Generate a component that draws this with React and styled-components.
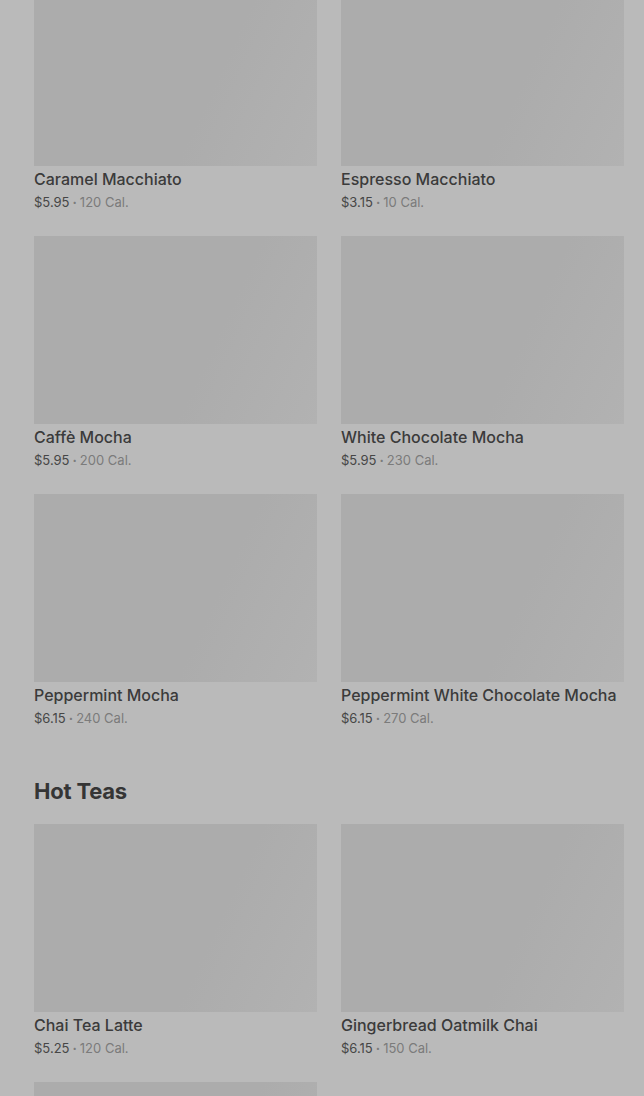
import React from "react";
import styled, { createGlobalStyle } from "styled-components";

const sections = [
  {
    title: null,
    items: [
      { name: "Caramel Macchiato", price: "$5.95", cal: "120 Cal." },
      { name: "Espresso Macchiato", price: "$3.15", cal: "10 Cal." },
      { name: "Caffè Mocha", price: "$5.95", cal: "200 Cal." },
      { name: "White Chocolate Mocha", price: "$5.95", cal: "230 Cal." },
      { name: "Peppermint Mocha", price: "$6.15", cal: "240 Cal." },
      { name: "Peppermint White Chocolate Mocha", price: "$6.15", cal: "270 Cal." },
    ],
  },
  {
    title: "Hot Teas",
    items: [
      { name: "Chai Tea Latte", price: "$5.25", cal: "120 Cal." },
      { name: "Gingerbread Oatmilk Chai", price: "$6.15", cal: "150 Cal." },
      { name: "London Fog Tea Latte", price: "$5.25", cal: "140 Cal." },
    ],
  },
];

const GlobalStyle = createGlobalStyle`
  html, body {
    margin: 0;
    padding: 0;
    background: #bababa;
    overflow: hidden;
  }
  body {
    font-family: Inter, "Noto Sans", sans-serif;
    -webkit-font-smoothing: antialiased;
  }
`;

const Page = styled.main`
  height: 1096px;
  overflow: hidden;
  padding: 0 20px 0 34px;
  background: #bababa;
`;

const Scroller = styled.div`
  margin-top: -22px;
`;

const Section = styled.section`
  & + & {
    margin-top: 49px;
  }
`;

const Heading = styled.h2`
  margin: 0 0 19px;
  font-size: 22px;
  line-height: 28px;
  font-weight: 700;
  color: #353535;
  letter-spacing: -0.2px;
`;

const Grid = styled.div`
  display: grid;
  grid-template-columns: repeat(2, 283px);
  column-gap: 24px;
  row-gap: 24px;
`;

const Card = styled.article`
  display: flex;
  flex-direction: column;
`;

const Thumb = styled.div`
  height: 188px;
  background: linear-gradient(115deg, #acacac 0%, #acacac 62%, #b2b2b2 100%);
`;

const Name = styled.div`
  padding-top: 1px;
  font-size: 16px;
  line-height: 24px;
  font-weight: 500;
  color: #3b3b3b;
  white-space: nowrap;
`;

const Meta = styled.div`
  margin-top: 2px;
  font-size: 13px;
  line-height: 19px;
  color: #464646;
`;

const Cal = styled.span`
  color: #7b7b7b;
`;

const Dot = styled.span`
  margin: 0 3px;
  color: #7b7b7b;
  font-weight: 700;
`;

const Item = ({ name, price, cal }) => (
  <Card>
    <Thumb />
    <Name>{name}</Name>
    <Meta>
      {price}
      <Dot>·</Dot>
      <Cal>{cal}</Cal>
    </Meta>
  </Card>
);

const App = () => (
  <>
    <GlobalStyle />
    <Page>
      <Scroller>
        {sections.map((s, i) => (
          <Section key={i}>
            {s.title && <Heading>{s.title}</Heading>}
            <Grid>
              {s.items.map((it) => (
                <Item key={it.name} {...it} />
              ))}
            </Grid>
          </Section>
        ))}
      </Scroller>
    </Page>
  </>
);

export default App;
